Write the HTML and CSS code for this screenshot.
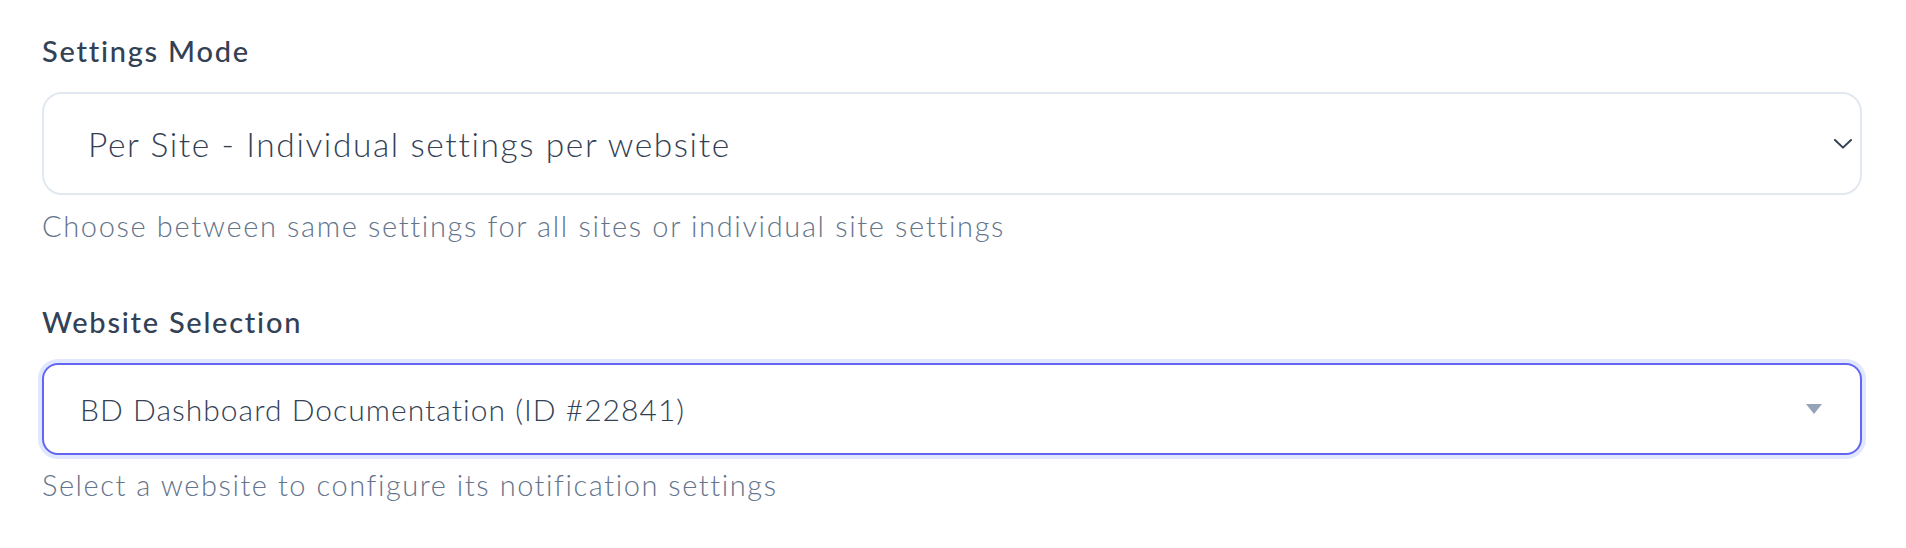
FILE: index.html
```html
<!DOCTYPE html>
<html lang="en">
<head>
<meta charset="utf-8">
<title>Notification Settings</title>
<link rel="stylesheet" href="styles.css">
</head>
<body>
<div class="form">
  <div class="field">
    <div class="label">Settings Mode</div>
    <div class="select select-plain">
      <span class="select-text">Per Site - Individual settings per website</span>
      <svg class="chevron" width="18" height="10" viewBox="0 0 18 10" aria-hidden="true">
        <path d="M1 1 L9 8.6 L17 1" fill="none" stroke="#334155" stroke-width="2" stroke-linecap="round" stroke-linejoin="round"/>
      </svg>
    </div>
    <div class="help">Choose between same settings for all sites or individual site settings</div>
  </div>
  <div class="field field-second">
    <div class="label">Website Selection</div>
    <div class="select select-focus">
      <span class="select-text select-text-sm">BD Dashboard Documentation (ID #22841)</span>
      <svg class="caret" width="16" height="10" viewBox="0 0 16 10" aria-hidden="true">
        <path d="M0 0 H16 L8 10 Z" fill="#94a3b8"/>
      </svg>
    </div>
    <div class="help help-second">Select a website to configure its notification settings</div>
  </div>
</div>
</body>
</html>
```

FILE: styles.css
```css
html, body {
  margin: 0;
  padding: 0;
  background: #ffffff;
}

body {
  font-family: "Lato", "Noto Sans", "Liberation Sans", sans-serif;
  color: #334155;
}

.form {
  padding: 31px 44px 0 42px;
  display: flex;
  flex-direction: column;
}

.field {
  display: flex;
  flex-direction: column;
}

.field-second {
  margin-top: 56px;
}

.label {
  font-size: 29px;
  line-height: 40px;
  font-weight: 500;
  letter-spacing: 1.75px;
  color: #334155;
  margin-bottom: 21px;
}

.select {
  box-sizing: border-box;
  display: flex;
  align-items: center;
  justify-content: space-between;
  background: #ffffff;
}

.select-plain {
  height: 103px;
  border: 2px solid #e2e8f0;
  border-radius: 20px;
  padding: 0 8px 0 44px;
}

.select-focus {
  height: 92px;
  border: 2px solid #6366f1;
  border-radius: 16px;
  box-shadow: 0 0 0 4px #e0e7ff;
  padding: 0 38px 0 36px;
}

.select-text {
  font-size: 33.5px;
  font-weight: 300;
  letter-spacing: 1.6px;
  color: #334155;
  white-space: nowrap;
}

.select-text-sm {
  font-size: 30px;
  letter-spacing: 1.03px;
}

.chevron,
.caret {
  flex: none;
  display: block;
}

.help {
  font-size: 29px;
  line-height: 40px;
  font-weight: 300;
  letter-spacing: 1.65px;
  color: #64748b;
  margin-top: 11px;
}

.help-second {
  margin-top: 10px;
  letter-spacing: 1.55px;
}
```
